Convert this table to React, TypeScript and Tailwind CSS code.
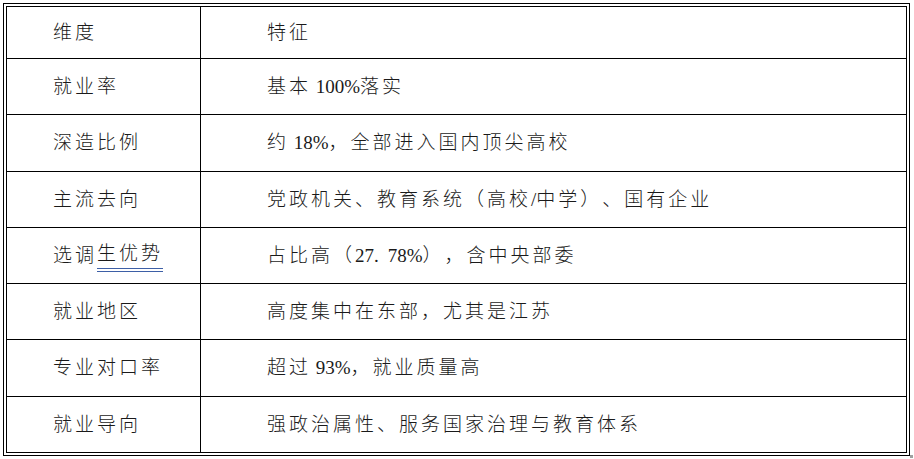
import React from 'react';

// 每行：高度（含底边框）、维度、特征
const rows = [
  { h: 'h-[52px]', dim: '维度', feat: '特征' },
  { h: 'h-[56px]', dim: '就业率', feat: '基本 100%落实' },
  { h: 'h-[57px]', dim: '深造比例', feat: '约 18%，全部进入国内顶尖高校' },
  { h: 'h-[56px]', dim: '主流去向', feat: '党政机关、教育系统（高校/中学）、国有企业' },
  { h: 'h-[56px]', dim: 'underline', feat: '占比高（27.78%），含中央部委' },
  { h: 'h-[56px]', dim: '就业地区', feat: '高度集中在东部，尤其是江苏' },
  { h: 'h-[57px]', dim: '专业对口率', feat: '超过 93%，就业质量高' },
  { h: 'h-[55px]', dim: '就业导向', feat: '强政治属性、服务国家治理与教育体系' },
];

// 把文字拆成中文与西文两段，西文（数字、%、/）不加字距
const Mixed = ({ text }: { text: string }) => {
  const parts = text.match(/[\x20-\x7e]+|[^\x20-\x7e]+/g) || [];
  return (
    <>
      {parts.map((p, i) =>
        /[\x20-\x7e]/.test(p) ? (
          <span key={i} className="tracking-normal">
            {p.includes('.') ? (
              <>
                {p.split('.')[0]}
                <span className="mr-[9px]">.</span>
                {p.split('.')[1]}
              </>
            ) : (
              p
            )}
          </span>
        ) : (
          <span key={i}>{p}</span>
        )
      )}
    </>
  );
};

export default function App() {
  return (
    <div
      className="relative w-[914px] h-[459px] bg-white pt-[3px] pl-[3px] text-[19px] font-light tracking-[3px] text-[#1a1a1a] [text-spacing-trim:space-all]"
      style={{ fontFamily: '"Liberation Serif", "Noto Sans CJK SC", serif' }}
    >
      <div className="w-[907px] h-[453px] border border-black p-[2px]">
        <div className="h-full border border-black flex flex-col">
          {rows.map((r, i) => (
            <div
              key={i}
              className={`flex ${r.h} ${i < rows.length - 1 ? 'border-b border-black' : ''}`}
            >
              <div className="w-[194px] shrink-0 border-r border-black flex items-center pl-[46px] pt-[1px] whitespace-nowrap">
                {r.dim === 'underline' ? (
                  <>
                    <span>选调</span>
                    <span className="border-b-[4px] border-double border-[#3d5fa6]">生优势</span>
                  </>
                ) : (
                  r.dim
                )}
              </div>
              <div className="flex-1 flex items-center pl-[66px] pt-[1px] whitespace-pre">
                <Mixed text={r.feat} />
              </div>
            </div>
          ))}
        </div>
      </div>
      <div className="absolute left-[910px] top-[455px] w-[3px] h-[3px] bg-[#a0a0a0]" />
    </div>
  );
}
